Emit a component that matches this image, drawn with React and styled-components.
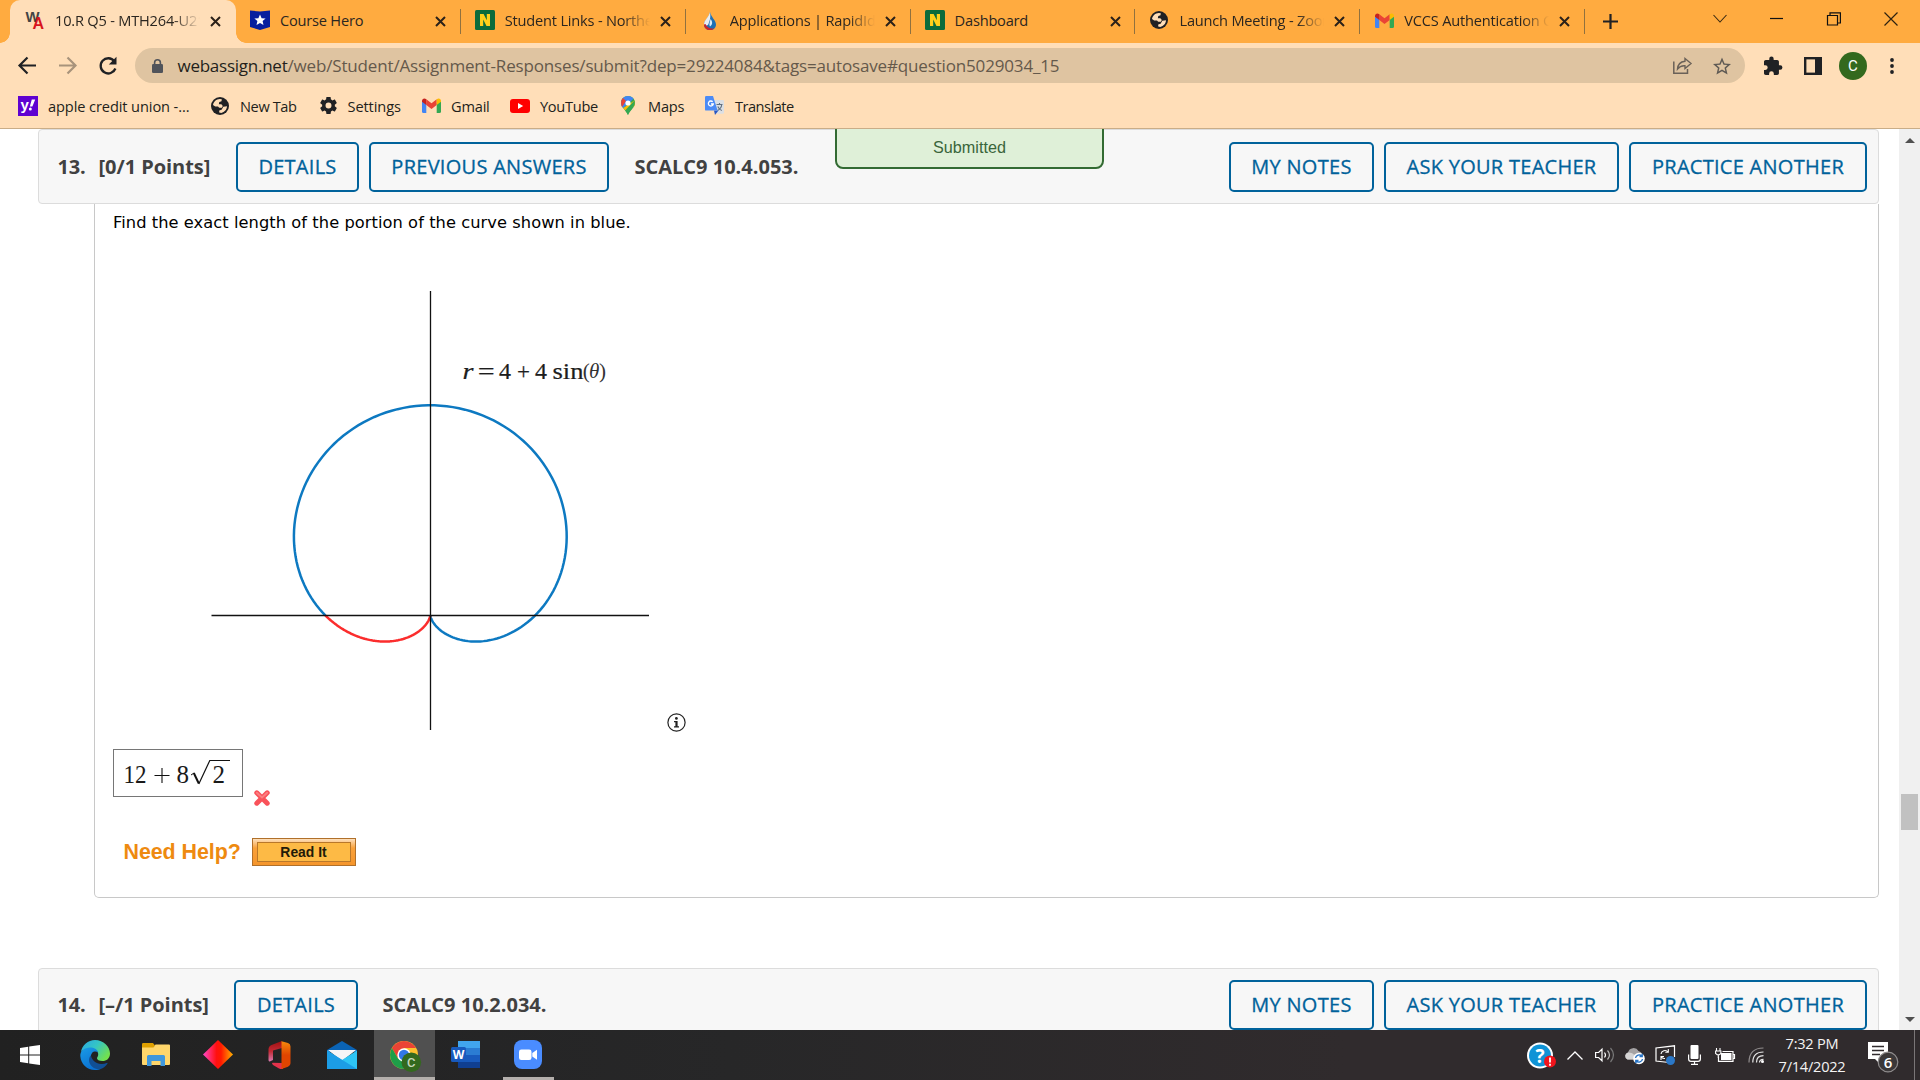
import React from "react";
import styled, { createGlobalStyle, css } from "styled-components";

const UI = `"Open Sans", "Noto Sans", sans-serif`;
const INK = "#202124";

const GlobalStyle = createGlobalStyle`
  * { box-sizing: border-box; }
  html, body { margin: 0; padding: 0; overflow: hidden; background: #fff; }
`;

const Screen = styled.div`
  width: 1920px;
  height: 1080px;
  display: flex;
  flex-direction: column;
  overflow: hidden;
  font-family: ${UI};
`;

const Icon = styled.svg`
  display: block;
  flex: none;
  width: ${(p) => p.$w}px;
  height: ${(p) => p.$h || p.$w}px;
  margin: ${(p) => p.$m || 0};
  overflow: visible;
`;

/* ---------- tab strip ---------- */

const TabStrip = styled.header`
  flex: none;
  height: 43px;
  display: flex;
  padding-left: 10px;
  background: #ffab40;
`;

const Tab = styled.div`
  position: relative;
  flex: none;
  width: 224.9px;
  height: 43px;
  display: flex;
  align-items: center;
  padding: 0 0 3px 15.5px;
  ${(p) =>
    p.$active &&
    css`
      width: 226px;
      margin-right: -1.1px;
      background: #ffdeb8;
      border-radius: 10px 10px 0 0;
      &::before,
      &::after {
        content: "";
        position: absolute;
        bottom: 0;
        width: 10px;
        height: 10px;
      }
      &::before {
        left: -10px;
        background: radial-gradient(circle at 0 0, transparent 9.5px, #ffdeb8 10px);
      }
      &::after {
        right: -10px;
        background: radial-gradient(circle at 100% 0, transparent 9.5px, #ffdeb8 10px);
      }
    `}
  ${(p) =>
    p.$divider &&
    css`
      &::after {
        content: "";
        position: absolute;
        right: -1px;
        top: 9px;
        width: 1px;
        height: 25px;
        background: #90713f;
      }
    `}
`;

const TabIcon = styled.span`
  flex: none;
  width: 29.5px;
  display: flex;
  align-items: center;
`;

const TabTitle = styled.span`
  width: 147px;
  flex: none;
  overflow: hidden;
  white-space: nowrap;
  font-size: 14.6px;
  letter-spacing: -0.2px;
  line-height: 22px;
  color: #2b2620;
  ${(p) =>
    p.$fade &&
    css`
      mask-image: linear-gradient(to right, #000 118px, transparent 145px);
    `}
`;

const TabClose = styled.span`
  width: 26px;
  display: flex;
  justify-content: center;
  padding: 3px 0 0 1px;
`;

const NewTab = styled.span`
  margin: 14px 0 0 19px;
`;

const WindowControls = styled.div`
  flex: 1;
  display: flex;
  justify-content: flex-end;
  align-items: flex-start;
  gap: 43.5px;
  padding: 12px 22px 0 0;
`;

/* ---------- toolbar ---------- */

const Toolbar = styled.div`
  flex: none;
  height: 46px;
  display: flex;
  align-items: center;
  padding: 0 26px 1px 18px;
  background: #ffdeb8;
`;

const NavButtons = styled.div`
  width: 117px;
  display: flex;
  align-items: center;
  gap: 19px;
`;

const Omnibox = styled.div`
  width: 1610px;
  height: 35px;
  display: flex;
  align-items: center;
  padding: 0 14px 0 17px;
  border-radius: 18px;
  background: #dfc4a1;
`;

const Url = styled.span`
  flex: 1;
  margin-left: 14.5px;
  font-size: 17px;
  letter-spacing: -0.16px;
  line-height: 24px;
  white-space: nowrap;
  color: #65594b;
`;

const UrlHost = styled.span`
  color: #231f1b;
  letter-spacing: -0.25px;
`;

const ToolbarActions = styled.div`
  flex: 1;
  display: flex;
  align-items: center;
  justify-content: flex-end;
`;

const Avatar = styled.span`
  width: 28px;
  height: 28px;
  margin: 0 23px 0 17px;
  border-radius: 50%;
  display: flex;
  align-items: center;
  justify-content: center;
  background: #33691e;
  color: #fff;
  font: 15px/28px Roboto, sans-serif;
`;

/* ---------- bookmarks ---------- */

const BookmarksBar = styled.nav`
  flex: none;
  height: 40px;
  display: flex;
  align-items: center;
  padding: 0 0 6px 18px;
  background: #ffdeb8;
  border-bottom: 1px solid #c9ad88;
`;

const Bookmark = styled.span`
  flex: none;
  width: ${(p) => p.$w}px;
  display: flex;
  align-items: center;
`;

const BookmarkIcon = styled.span`
  width: ${(p) => p.$w}px;
  flex: none;
`;

const BookmarkLabel = styled.span`
  font-size: 14.6px;
  letter-spacing: ${(p) => p.$ls}px;
  line-height: 20px;
  white-space: nowrap;
  color: #231f1b;
`;

/* ---------- page ---------- */

const Viewport = styled.main`
  position: relative;
  flex: none;
  height: 901px;
  display: flex;
  overflow: hidden;
  background: #fff;
`;

const Document = styled.div`
  width: 1899px;
  padding: 0 20px 0 38px;
`;

const QuestionHeader = styled.div`
  height: 75px;
  display: flex;
  align-items: flex-start;
  padding: ${(p) => p.$top}px 11px 0 ${(p) => p.$left}px;
  background: #f7f7f7;
  border: 1px solid #dcdcdc;
  border-radius: 4px;
`;

const HeaderText = styled.span`
  width: ${(p) => p.$w}px;
  flex: none;
  font-weight: 700;
  font-size: 20px;
  line-height: 49px;
  letter-spacing: ${(p) => p.$ls || 0}px;
  white-space: nowrap;
  color: #414141;
`;

const OutlineButton = styled.button`
  flex: none;
  width: ${(p) => p.$w}px;
  height: 50px;
  margin-right: ${(p) => p.$gap || 0}px;
  padding: 0 0 2px;
  border: 2px solid #00629b;
  border-radius: 5px;
  background: transparent;
  color: #00629b;
  font: 400 20px/46px ${UI};
  letter-spacing: 0.28px;
  -webkit-text-stroke: 0.3px #00629b;
  white-space: nowrap;
`;

const HeaderSpacer = styled.div`
  flex: 1;
`;

const Toast = styled.div`
  position: absolute;
  left: 835px;
  top: -8px;
  width: 269px;
  height: 48px;
  padding-top: 7px;
  border: 2px solid #336b33;
  border-radius: 8px;
  background: #dff0d8;
  color: #3a653b;
  text-align: center;
  font: 16.2px/34px "Liberation Sans", sans-serif;
`;

const QuestionBody = styled.section`
  height: 694px;
  margin: 0 0 70px 56px;
  padding: 8px 18px 0;
  border: 1px solid #c8c8c8;
  border-top: 0;
  border-radius: 0 0 5px 5px;
`;

const Prompt = styled.p`
  margin: 0;
  font: 16.25px/22px "DejaVu Sans", sans-serif;
  letter-spacing: 0.06px;
  color: #000;
`;

const Figure = styled.div`
  height: 498px;
  margin-top: 2px;
  display: flex;
  align-items: flex-end;
`;

const AnswerRow = styled.div`
  margin-top: 15px;
  display: flex;
  align-items: flex-end;
`;

const AnswerBox = styled.div`
  width: 130px;
  height: 48px;
  border: 1px solid #767676;
`;

const HelpRow = styled.div`
  display: flex;
  align-items: center;
  margin: 41px 0 0 10.5px;
`;

const HelpLabel = styled.span`
  width: 128.5px;
  font: 700 21.4px/28px "Liberation Sans", sans-serif;
  letter-spacing: -0.05px;
  color: #ee8a10;
`;

const ReadIt = styled.button`
  width: 104px;
  height: 28px;
  padding: 3px 4px;
  border: 1px solid #b0702a;
  background: linear-gradient(#fde0bd, #f9a13a 35%, #f5952b);
`;

const ReadItFace = styled.span`
  display: block;
  height: 20px;
  border: 1px solid #b9782a;
  background: #fdba45;
  color: #221a08;
  font: 700 13.9px/18px "Liberation Sans", sans-serif;
  padding-right: 1px;
  text-align: center;
`;

const ScrollBar = styled.div`
  width: 21px;
  background: #f0f0f0;
  display: flex;
  flex-direction: column;
  align-items: center;
`;

const ScrollThumb = styled.div`
  width: 17px;
  height: 36px;
  margin: 651px 0 187px;
  background: #c1c1c1;
`;

/* ---------- taskbar ---------- */

const Taskbar = styled.footer`
  flex: none;
  height: 50px;
  display: flex;
  background: linear-gradient(to right, #212121, #272728 38%, #302b2d 70%);
`;

const AppSlot = styled.span`
  flex: none;
  width: ${(p) => p.$w || 61.5}px;
  margin-right: ${(p) => p.$mr || 0}px;
  display: flex;
  align-items: center;
  justify-content: center;
  padding-top: 2px;
  background: ${(p) => (p.$active ? "#505050" : "transparent")};
  border-bottom: 3px solid ${(p) => (p.$open ? "#b4afac" : "transparent")};
  background-clip: padding-box;
`;

const Tray = styled.div`
  flex: 1;
  display: flex;
  justify-content: flex-end;
  align-items: center;
`;

const Clock = styled.div`
  width: 96px;
  text-align: center;
  color: #f4f4f4;
  font-size: 14.6px;
  letter-spacing: -0.25px;
  line-height: 23px;
  padding-bottom: 1px;
`;

const DesktopEdge = styled.span`
  width: 6px;
  height: 50px;
  border-left: 1px solid #7a7677;
`;

/* ---------- drawings ---------- */

const Cross = () => (
  <Icon $w={11} viewBox="0 0 11 11">
    <path d="M1 1l9 9M10 1l-9 9" stroke="#2b2119" strokeWidth="2" />
  </Icon>
);

const WebAssign = () => (
  <Icon $w={19} $h={20} viewBox="0 0 19 20">
    <text x="-.5" y="12" fontFamily="Liberation Sans" fontWeight="700" fontSize="14" textLength="14" lengthAdjust="spacingAndGlyphs" fill="#444">W</text>
    <text x="6.500" y="19" fontFamily="Liberation Sans" fontWeight="700" fontSize="16" fill="#d8141c">A</text>
  </Icon>
);

const CourseHero = () => (
  <Icon $w={20} viewBox="0 0 20 20">
    <path d="M0 .5 10 1.500 20 .5V17l-10 3-10-3z" fill="#071e9e" />
    <path d="M10 4.500l1.600 3.700 4 .3-3 2.600.9 3.900-3.500-2-3.500 2 .9-3.900-3-2.600 4-.3z" fill="#fff" />
  </Icon>
);

const Nova = () => (
  <Icon $w={20} viewBox="0 0 20 20">
    <rect width="20" height="20" rx="1.500" fill="#0c6b3b" />
    <path d="M5 16V4h3.600l3.200 6.300V4H15v12h-3.500L8.200 9.600V16z" fill="#ffcf1b" />
  </Icon>
);

const Drop = () => (
  <Icon $w={12} $h={18} $m="2px 0 0 4px" viewBox="0 0 12 18">
    <path d="M6 0C7 5 12 8.500 12 12.500 12 16 9.500 18 6 18S0 16 0 12.500C0 8.500 5.500 5 6 0z" fill="#1e70b4" />
    <path d="M6 0C5 5 0 8 0 12.500c1 1.500 3.500 1.500 4.500-.5C5.500 9 7 6 6 0z" fill="#e9eef3" />
    <path d="M0 12.500C0 16 2.500 18 6 18c2 0 3.500-.6 4.500-1.800C6 17 3 15.500 1.500 12z" fill="#c8262d" />
    <path d="M6.500 7C9 10 8.500 13 6 14.500 4.500 12.500 6 10 6.500 7z" fill="#d9ecf8" />
  </Icon>
);

const Globe = () => (
  <Icon $w={18} viewBox="0 0 18 18">
    <circle cx="9" cy="9" r="9" fill={INK} />
    <path d="M10.800 2.300 7.800 3.800 6.300 6.200l1.600 1.600h3l1.800 1.600 2.600.2.900-1.600C16 4.800 13.500 2.600 10.800 2.300z" fill={INK} />
    <path d="M2 8C2.500 4.500 5.300 2.100 8.800 1.900l2 .3-.3 2-2.200.9-.5 2.100h2.600l1.400 1.900-1 1.700H8.200L7 9.500H4.200z" fill="#ffdeb8" />
    <path d="M16 9.300c-.1 3.300-2.500 6-5.700 6.600L8.200 15.600V13.400L10.600 12.700 12.300 9.800z" fill="#ffdeb8" />
  </Icon>
);

const Gmail = () => (
  <Icon $w={19} $h={15} viewBox="0 0 19 15">
    <path d="M0 3v10.500Q0 15 1.400 15H4.300V5z" fill="#4285f4" />
    <path d="M19 3v10.500Q19 15 17.600 15h-2.900V5z" fill="#34a853" />
    <path d="M4.300 1.200 9.500 5.200 14.700 1.200V7L9.500 11 4.300 7z" fill="#ea4335" />
    <path d="M0 3C0 .4 2.500-.4 4.300 1.200V7L0 3.800z" fill="#c5221f" />
    <path d="M19 3c0-2.600-2.500-3.400-4.300-1.800V7L19 3.800z" fill="#fbbc04" />
  </Icon>
);

const Yahoo = () => (
  <Icon $w={20} viewBox="0 0 20 20">
    <rect width="20" height="20" fill="#5f01d1" />
    <text x="2.500" y="14" fontFamily="Liberation Sans" fontWeight="700" fontSize="15" fill="#fff">y</text>
    <path d="M13.800 3.500h3.400l-2.800 7h-2.600z" fill="#fff" />
    <circle cx="12.300" cy="13" r="1.500" fill="#fff" />
  </Icon>
);

const Gear = ({ size }) => (
  <Icon $w={size} viewBox="2 2 20 20">
    <path fill={INK} d="M19.430 12.980c.04-.32.07-.64.07-.98s-.03-.66-.07-.98l2.110-1.650c.19-.15.24-.42.12-.64l-2-3.460c-.12-.22-.39-.3-.61-.22l-2.490 1c-.52-.4-1.080-.73-1.690-.98l-.38-2.650C14.460 2.180 14.250 2 14 2h-4c-.25 0-.46.18-.49.42l-.38 2.650c-.61.25-1.170.59-1.690.98l-2.490-1c-.23-.09-.49 0-.61.22l-2 3.460c-.13.22-.07.49.12.64l2.110 1.650c-.04.32-.07.65-.07.98s.03.66.07.98l-2.110 1.650c-.19.15-.24.42-.12.64l2 3.460c.12.22.39.3.61.22l2.490-1c.52.4 1.080.73 1.690.98l.38 2.650c.03.24.24.42.49.42h4c.25 0 .46-.18.49-.42l.38-2.650c.61-.25 1.170-.59 1.690-.98l2.490 1c.23.09.49 0 .61-.22l2-3.460c.12-.22.07-.49-.12-.64zM12 15.500A3.500 3.500 0 1 1 12 8.500a3.500 3.500 0 0 1 0 7z" />
  </Icon>
);

const YouTube = () => (
  <Icon $w={20} $h={14} viewBox="0 0 20 14">
    <rect width="20" height="14" rx="3" fill="#f00" />
    <path d="M8 4l5.200 3L8 10z" fill="#fff" />
  </Icon>
);

const Maps = () => (
  <Icon $w={14} $h={19} viewBox="0 0 14 19">
    <path d="M7 0C3 0 0 3 0 7c0 4.500 5 7 7 12 2-5 7-7.500 7-12 0-4-3-7-7-7z" fill="#34a853" />
    <path d="M0 7c0 2 1 3.700 2.200 5L12.500 2.800C11.200 1 9.200 0 7 0 3 0 0 3 0 7z" fill="#4285f4" />
    <path d="M2.200 12 13.500 4.500c.9 2.300.6 4.300-.4 5.900L4.300 14.400z" fill="#fbbc04" />
    <path d="M.1 6C.3 4.300 1 3 2 2l3 3-4 6C.4 9.800 0 8.200.1 6z" fill="#ea4335" />
    <path d="M13.500 4.600c1.300 4-1 6.400-3.200 8.900-1.400 1.600-2.700 3.300-3.300 5.500-.7-1.700-1.700-3.200-2.900-4.600z" fill="#34a853" />
    <circle cx="7" cy="7" r="2.600" fill="#fff" />
  </Icon>
);

const Translate = () => (
  <Icon $w={19} viewBox="0 0 19 19">
    <path d="M8 4h9.800q1.200 0 1.200 1.200V16.500q0 1.200-1.200 1.200H12z" fill="#dcdfe3" />
    <path d="M11.500 8.500h6M14.500 7v1.500M12.500 14.500c2.500-1.200 4-3.200 4.200-6M12.800 10.500c.8 1.900 2 3.200 4 4" stroke="#5f6f80" strokeWidth="1.100" fill="none" />
    <path d="M9 14.500h4.500l-3.500 4.500z" fill="#2456c5" />
    <path d="M1.200 0H8l4.600 14.600H1.200Q0 14.600 0 13.400V1.200Q0 0 1.200 0z" fill="#4c8bf5" />
    <path d="M7.700 5.800A2.500 2.500 0 1 0 8.300 8H6" stroke="#fff" strokeWidth="1.300" fill="none" />
  </Icon>
);

const TAU = Math.PI * 2;
const UNIT = 26.25;

function cardioid(from, to) {
  const points = [];
  for (let i = 0; i <= 160; i++) {
    const t = from + ((to - from) * i) / 160;
    const r = UNIT * (4 + 4 * Math.sin(t));
    points.push(`${(317.3 + r * Math.cos(t)).toFixed(2)} ${(379.3 - r * Math.sin(t)).toFixed(2)}`);
  }
  return `M${points.join("L")}`;
}

const Graph = () => (
  <Icon $w={551} $h={498} viewBox="0 0 551 498">
    <path d={cardioid(-TAU / 4, TAU / 2)} fill="none" stroke="#0d79c1" strokeWidth="2.500" />
    <path d={cardioid(TAU / 2, (TAU * 3) / 4)} fill="none" stroke="#fb2d2d" strokeWidth="2.500" />
    <path d="M317.500 55V494M98.500 379.500H536" stroke="#111" strokeWidth="1.300" />
    <g fontFamily="Liberation Serif" fontSize="23" fill="#1d1d1d" stroke="#1d1d1d" strokeWidth=".2">
      <text x="349.500" y="142.500" fontStyle="italic" textLength="11" lengthAdjust="spacingAndGlyphs">r</text>
      <text x="364.800" y="142.500" textLength="17" lengthAdjust="spacingAndGlyphs">=</text>
      <text x="386" y="142.500" textLength="12" lengthAdjust="spacingAndGlyphs">4</text>
      <text x="404" y="142.500">+</text>
      <text x="422" y="142.500" textLength="12" lengthAdjust="spacingAndGlyphs">4</text>
      <text x="439.500" y="142.500" textLength="31" lengthAdjust="spacingAndGlyphs">sin</text>
    </g>
    <g fontFamily="Liberation Serif" fontSize="21" fill="#333">
      <text x="469.800" y="142">(</text>
      <text x="476" y="142" fontStyle="italic">θ</text>
      <text x="486" y="142">)</text>
    </g>
  </Icon>
);

const Info = () => (
  <Icon $w={19} $m="0 0 2px 2.5px" viewBox="0 0 19 19">
    <circle cx="9.500" cy="9.500" r="8.600" fill="none" stroke="#222" strokeWidth="1.200" />
    <circle cx="9.400" cy="5.400" r="1.400" fill="#222" />
    <path d="M7 8h3.600v5.300H12v1.200H7v-1.200h1.400V9.200H7z" fill="#222" />
  </Icon>
);

const Answer = () => (
  <Icon $w={128} $h={46} viewBox="0 0 128 46">
    <g fontFamily="Liberation Serif" fontSize="26" fill="#1a1a1a">
      <text x="9.500" y="32.500" textLength="23" lengthAdjust="spacingAndGlyphs">12</text>
      <text x="62.500" y="32.500" textLength="12.500" lengthAdjust="spacingAndGlyphs">8</text>
      <text x="98.500" y="32.500" textLength="12.500" lengthAdjust="spacingAndGlyphs">2</text>
    </g>
    <path d="M40.500 25.500h15M48 18v15" stroke="#111" strokeWidth="1.100" />
    <path d="M77 25l3-2" stroke="#111" strokeWidth="1" />
    <path d="M79.800 23l5 10.500" stroke="#111" strokeWidth="2" />
    <path d="M84.800 34l11-23.500H116" stroke="#111" strokeWidth="1.200" fill="none" />
  </Icon>
);

const WrongMark = () => (
  <Icon $w={16} $m="0 0 -9px 11px" viewBox="0 0 16 16">
    <path d="M2.800 2.800l10.400 10.400M13.200 2.800 2.800 13.200" stroke="#f9525a" strokeWidth="5" strokeLinecap="round" />
    <path d="M2.800 2.800 8 7.500l5.200-4.700" stroke="#fc7e80" strokeWidth="2" fill="none" strokeLinecap="round" />
  </Icon>
);

const ScrollArrow = ({ down }) => (
  <Icon $w={10} $h={5} $m={down ? 0 : "9px 0 0"} viewBox="0 0 10 5">
    <path d={down ? "M0 0h10L5 5z" : "M0 5h10L5 0z"} fill="#505050" />
  </Icon>
);

const Edge = () => (
  <Icon $w={30} viewBox="0 0 30 30">
    <defs>
      <linearGradient id="e1" x1="0" y1="0" x2="1" y2=".6">
        <stop offset="0" stopColor="#2aa6e4" /><stop offset=".5" stopColor="#34c5c5" /><stop offset="1" stopColor="#72e04f" />
      </linearGradient>
      <linearGradient id="e2" x1="0" y1="0" x2=".5" y2="1">
        <stop offset="0" stopColor="#1a9be6" /><stop offset="1" stopColor="#0a70d0" />
      </linearGradient>
    </defs>
    <path d="M1 12C2 5 8 0 15 0c8.500 0 15 6.500 15 13.500 0 5-3.500 7.500-7.500 7.500-3.500 0-5.500-1.500-5.500-2.800 0-1 1.200-1.600 1.200-4 0-3-2.700-5.700-7-5.700C6.500 8.500 3 10 1 12z" fill="url(#e1)" />
    <path d="M.3 16C0 11 4.500 7.500 10 7.500c4 0 7.500 1.800 8 5-1.200-1.200-3-1.300-4.500-.7C11 13 10 17 11.500 21c1.500 4.500 5.500 8.300 10 7.500-2 1-4 1.500-6.500 1.500C7 30 .8 24 .3 16z" fill="url(#e2)" />
    <path d="M11 15.500C8 18 8.500 23 12 26.500c3 3 7.500 3.300 10.500 1.800 2.300-1.200 4-3 5-4.800.3-.6-.2-.9-.8-.6-1.700.9-3.500 1.200-5.500 1.100-5-.3-9.500-3.800-10.200-8.500z" fill="#114f94" />
  </Icon>
);

const Explorer = () => (
  <Icon $w={28} $h={23} viewBox="0 0 28 23">
    <path d="M0 1.200Q0 0 1.200 0H11l2 2.500-1 3H0z" fill="#dfa000" />
    <path d="M0 4.500h11.500l2-3H27q1 0 1 1V21q0 1-1 1H1q-1 0-1-1z" fill="#ffd66b" />
    <path d="M5 23v-9.500Q5 12 6.500 12h15q1.500 0 1.500 1.500V23h-4.500v-5h-9v5z" fill="#3f97dc" />
  </Icon>
);

const Diamond = () => (
  <Icon $w={30} $h={29} viewBox="0 0 30 29">
    <defs>
      <linearGradient id="dm"><stop offset="0" stopColor="#ff48c8" /><stop offset=".45" stopColor="#ff1010" /><stop offset=".6" stopColor="#ff1800" /><stop offset="1" stopColor="#ffb000" /></linearGradient>
    </defs>
    <path d="M15 0l15 14.500L15 29 0 14.500z" fill="url(#dm)" />
  </Icon>
);

const Office = () => (
  <Icon $w={23} $h={28} viewBox="0 0 23 28">
    <defs>
      <linearGradient id="of" x2="0" y2="1"><stop offset="0" stopColor="#9e1010" /><stop offset=".5" stopColor="#c22a35" /><stop offset="1" stopColor="#d87bb0" /></linearGradient>
      <linearGradient id="og" x2="0" y2="1"><stop offset="0" stopColor="#f58a0c" /><stop offset=".5" stopColor="#e04500" /></linearGradient>
    </defs>
    <path d="M14 0 3.500 4Q.5 5.200.5 8.500V19q0 2 1.800 1.300L5 19V9.500L14 7z" fill="url(#of)" />
    <path d="M4.500 21.800 14 22l1 6q-2 .3-4-.5l-6-3.500q-1.800-1.600-.5-2.200z" fill="#e3324b" />
    <path d="M13.500.2 20 2q2.500.8 2.500 3.500v16.800q0 2.700-2.500 3.500L13.500 28z" fill="url(#og)" />
  </Icon>
);

const Mail = () => (
  <Icon $w={30} $h={28} viewBox="0 0 30 28">
    <path d="M0 9 15 0l15 9v2H0z" fill="#0a63b5" />
    <path d="M1 9h28L15 20z" fill="#f5f5f7" />
    <path d="M0 9.500 15 19l15-9.500V28H0z" fill="#2ec5f5" />
    <path d="M0 28V9.500L30 28z" fill="#1c9de6" />
  </Icon>
);

const Chrome = () => (
  <Icon $w={28} $m="0 0 0 -1px" viewBox="0 0 28 28">
    <circle cx="14" cy="14" r="14" fill="#fbc02d" />
    <path d="M14 7h12.100A14 14 0 0 0 1.900 7L8 17.500z" fill="#ea4335" />
    <path d="M1.900 7A14 14 0 0 0 13.500 28L20 17.500 8 17.500z" fill="#1e9e49" />
    <circle cx="14" cy="14" r="6.700" fill="#fff" />
    <circle cx="14" cy="14" r="5.200" fill="#3277e8" />
    <circle cx="21.300" cy="21.300" r="9.800" fill="#33691e" />
    <text x="21.300" y="26" textAnchor="middle" fontFamily="Roboto" fontSize="13" fontWeight="500" fill="#c5d6bd">C</text>
  </Icon>
);

const Word = () => (
  <Icon $w={29} $h={27} $m="0 0 0 -2px" viewBox="0 0 29 27">
    <path d="M7 0h22v7H7z" fill="#41a5ee" />
    <path d="M7 7h22v7H7z" fill="#2b7cd3" />
    <path d="M7 14h22v7H7z" fill="#185abd" />
    <path d="M7 21h22v6H7z" fill="#103f91" />
    <rect y="6" width="15" height="15" rx="1.500" fill="#185abd" />
    <text x="7.500" y="18" textAnchor="middle" fontFamily="Open Sans" fontSize="12" fontWeight="700" fill="#fff">W</text>
  </Icon>
);

const Zoom = () => (
  <Icon $w={28} $h={29} viewBox="0 0 28 29">
    <rect width="28" height="29" rx="8" fill="#4a8cff" />
    <rect x="5" y="9.500" width="12.500" height="10.500" rx="2.300" fill="#fff" />
    <path d="M18.300 13 23 9.800v9.900l-4.700-3.200z" fill="#fff" />
  </Icon>
);

const TABS = [
  { title: "10.R Q5 - MTH264-U21B", icon: <WebAssign />, active: true, fade: true },
  { title: "Course Hero", icon: <CourseHero />, divider: true },
  { title: "Student Links - Northern", icon: <Nova />, divider: true, fade: true },
  { title: "Applications | RapidIdent", icon: <Drop />, divider: true, fade: true },
  { title: "Dashboard", icon: <Nova />, divider: true },
  { title: "Launch Meeting - Zoom", icon: <Globe />, divider: true, fade: true },
  { title: "VCCS Authentication C", icon: <Gmail />, divider: true, fade: true },
];

const BOOKMARKS = [
  { label: "apple credit union -...", icon: <Yahoo />, width: 193, iconWidth: 30, ls: -0.1 },
  { label: "New Tab", icon: <Globe />, width: 109, iconWidth: 29, ls: -0.4 },
  { label: "Settings", icon: <Gear size={17} />, width: 102, iconWidth: 27.5, ls: -0.1 },
  { label: "Gmail", icon: <Gmail />, width: 88, iconWidth: 29, ls: -0.2 },
  { label: "YouTube", icon: <YouTube />, width: 111, iconWidth: 30, ls: -0.3 },
  { label: "Maps", icon: <Maps />, width: 84, iconWidth: 27, ls: -0.2 },
  { label: "Translate", icon: <Translate />, width: 100, iconWidth: 30, ls: -0.5 },
];

function RightButtons() {
  return (
    <>
      <HeaderSpacer />
      <OutlineButton $w={145} $gap={10}>MY NOTES</OutlineButton>
      <OutlineButton $w={235} $gap={10}>ASK YOUR TEACHER</OutlineButton>
      <OutlineButton $w={238}>PRACTICE ANOTHER</OutlineButton>
    </>
  );
}

export default function App() {
  return (
    <Screen>
      <GlobalStyle />
      <TabStrip>
        {TABS.map((t) => (
          <Tab key={t.title} $active={t.active} $divider={t.divider}>
            <TabIcon>{t.icon}</TabIcon>
            <TabTitle $fade={t.fade}>{t.title}</TabTitle>
            <TabClose><Cross /></TabClose>
          </Tab>
        ))}
        <NewTab>
          <Icon $w={15} viewBox="0 0 15 15"><path d="M7.500 0v15M0 7.500h15" stroke={INK} strokeWidth="2.200" /></Icon>
        </NewTab>
        <WindowControls>
          <Icon $w={14} $m="2px 0 0" viewBox="0 0 14 14"><path d="M.5 1l6.500 7 6.500-7" fill="none" stroke="#3a2a12" strokeWidth="1.100" /></Icon>
          <Icon $w={13} viewBox="0 0 13 13"><path d="M0 6.500h13" stroke="#111" strokeWidth="1.200" /></Icon>
          <Icon $w={14} viewBox="0 0 14 14"><path d="M.5 3.500h10v9.500H.5zM3 3V.8h10.400V11H11" fill="none" stroke="#111" strokeWidth="1.200" /></Icon>
          <Icon $w={14} viewBox="0 0 14 14"><path d="M.5.5l13 13M13.500.5l-13 13" stroke="#2e2210" strokeWidth="1.200" /></Icon>
        </WindowControls>
      </TabStrip>

      <Toolbar>
        <NavButtons>
          <Icon $w={19} viewBox="0 0 19 19"><path d="M18 9.500H2M9.500 1.500l-8 8 8 8" fill="none" stroke={INK} strokeWidth="2.200" /></Icon>
          <Icon $w={19} $m="0 0 0 2px" viewBox="0 0 19 19"><path d="M1 9.500h16M9.500 1.500l8 8-8 8" fill="none" stroke="#a8937b" strokeWidth="2.200" /></Icon>
          <Icon $w={20} $m="0 0 0 2px" viewBox="0 0 20 20">
            <path d="M16.300 5.200A7.600 7.600 0 1 0 17.400 12.500" fill="none" stroke={INK} strokeWidth="2.300" />
            <path d="M18.500.8v7.700h-7.700z" fill={INK} />
          </Icon>
        </NavButtons>
        <Omnibox>
          <Icon $w={11} $h={14} viewBox="0 0 11 14">
            <rect y="5" width="11" height="9" rx="1.300" fill="#50535a" />
            <path d="M2.600 6V3.700a2.900 2.900 0 0 1 5.800 0V6" fill="none" stroke="#50535a" strokeWidth="1.600" />
          </Icon>
          <Url><UrlHost>webassign.net</UrlHost>/web/Student/Assignment-Responses/submit?dep=29224084&amp;tags=autosave#question5029034_15</Url>
          <Icon $w={19} $h={17} $m="0 21px 0 0" viewBox="0 0 19 17">
            <path d="M.8 4.500v11.700h13.700V12" fill="none" stroke="#6a6158" strokeWidth="1.500" />
            <path d="M12 1.500l6 5-6 5V8.800C8.500 8.500 6.500 9.500 4.500 12c.3-4.500 3-7.300 7.500-7.800z" fill="none" stroke="#6a6158" strokeWidth="1.400" />
          </Icon>
          <Icon $w={18} viewBox="2 2 20 19">
            <path fill="#5f5a54" d="M22 9.240l-7.190-.62L12 2 9.190 8.630 2 9.240l5.460 4.730L5.820 21 12 17.270 18.180 21l-1.630-7.030zM12 15.400l-3.760 2.270 1-4.280-3.320-2.880 4.380-.38L12 6.100l1.710 4.040 4.380.38-3.320 2.880 1 4.280z" />
          </Icon>
        </Omnibox>
        <ToolbarActions>
          <Icon $w={18} viewBox="2 1.500 20.500 20.500">
            <path fill={INK} d="M20.500 11H19V7c0-1.100-.9-2-2-2h-4V3.500a2.500 2.500 0 0 0-5 0V5H4c-1.100 0-2 .9-2 2v3.800h1.500a2.700 2.700 0 0 1 0 5.400H2V20c0 1.100.9 2 2 2h3.800v-1.500a2.700 2.700 0 0 1 5.400 0V22H17c1.100 0 2-.9 2-2v-4h1.500a2.500 2.500 0 0 0 0-5z" />
          </Icon>
          <Icon $w={18} $m="0 0 0 22px" viewBox="0 0 18 18">
            <rect x="1.200" y="1.200" width="15.600" height="15.600" fill="none" stroke={INK} strokeWidth="2.400" />
            <rect x="11" y="1" width="6" height="16" fill={INK} />
          </Icon>
          <Avatar>C</Avatar>
          <Icon $w={4} $h={16} viewBox="0 0 4 16"><g fill={INK}><circle cx="2" cy="2" r="1.900" /><circle cx="2" cy="8" r="1.900" /><circle cx="2" cy="14" r="1.900" /></g></Icon>
        </ToolbarActions>
      </Toolbar>

      <BookmarksBar>
        {BOOKMARKS.map((b) => (
          <Bookmark key={b.label} $w={b.width}>
            <BookmarkIcon $w={b.iconWidth}>{b.icon}</BookmarkIcon>
            <BookmarkLabel $ls={b.ls}>{b.label}</BookmarkLabel>
          </Bookmark>
        ))}
      </BookmarksBar>

      <Viewport>
        <Document>
          <QuestionHeader $top={12} $left={18.5}>
            <HeaderText $w={41} $ls={-0.2}>13.</HeaderText>
            <HeaderText $w={137.5} $ls={-0.05}>[0/1 Points]</HeaderText>
            <OutlineButton $w={123} $gap={10}>DETAILS</OutlineButton>
            <OutlineButton $w={240} $gap={25.5}>PREVIOUS ANSWERS</OutlineButton>
            <HeaderText $w={169}>SCALC9 10.4.053.</HeaderText>
            <RightButtons />
          </QuestionHeader>
          <QuestionBody>
            <Prompt>Find the exact length of the portion of the curve shown in blue.</Prompt>
            <Figure><Graph /><Info /></Figure>
            <AnswerRow>
              <AnswerBox><Answer /></AnswerBox>
              <WrongMark />
            </AnswerRow>
            <HelpRow>
              <HelpLabel>Need Help?</HelpLabel>
              <ReadIt><ReadItFace>Read It</ReadItFace></ReadIt>
            </HelpRow>
          </QuestionBody>
          <QuestionHeader $top={11} $left={18.5}>
            <HeaderText $w={41} $ls={-0.2}>14.</HeaderText>
            <HeaderText $w={135.5} $ls={-0.05}>[–/1 Points]</HeaderText>
            <OutlineButton $w={124} $gap={24.5}>DETAILS</OutlineButton>
            <HeaderText $w={169}>SCALC9 10.2.034.</HeaderText>
            <RightButtons />
          </QuestionHeader>
        </Document>
        <ScrollBar>
          <ScrollArrow />
          <ScrollThumb />
          <ScrollArrow down />
        </ScrollBar>
        <Toast>Submitted</Toast>
      </Viewport>

      <Taskbar>
        <AppSlot $w={60} $mr={4}>
          <Icon $w={20} viewBox="0 0 20 20"><path d="M0 3l8.200-1.200v7.700H0zM9.200 1.600 20 0v9.500H9.200zM0 10.500h8.200v7.700L0 17zM9.200 10.500H20V20L9.200 18.400z" fill="#fff" /></Icon>
        </AppSlot>
        <AppSlot><Edge /></AppSlot>
        <AppSlot><Explorer /></AppSlot>
        <AppSlot><Diamond /></AppSlot>
        <AppSlot><Office /></AppSlot>
        <AppSlot $w={64}><Mail /></AppSlot>
        <AppSlot $w={61} $active $open><Chrome /></AppSlot>
        <AppSlot $w={62} $mr={5.5}><Word /></AppSlot>
        <AppSlot $w={51} $open><Zoom /></AppSlot>
        <Tray>
          <Icon $w={29} $h={27} viewBox="0 0 29 27">
            <circle cx="13" cy="13.500" r="13" fill="#fff" />
            <circle cx="13" cy="13.500" r="11" fill="#0f93d6" />
            <text x="13" y="20.500" textAnchor="middle" fontFamily="Open Sans" fontWeight="700" fontSize="19" fill="#fff">?</text>
            <circle cx="23" cy="19.500" r="6" fill="#f0141c" />
            <path d="M23 15.500v5M23 21.800v2" stroke="#fff" strokeWidth="1.800" />
          </Icon>
          <Icon $w={16} $h={9} $m="0 12px 0 11px" viewBox="0 0 16 9"><path d="M.5 8.500 8 1l7.500 7.500" fill="none" stroke="#fff" strokeWidth="1.300" /></Icon>
          <Icon $w={20} $h={16} $m="0 9px 0 0" viewBox="0 0 20 16">
            <path d="M.6 5.500h3L7 2.200v11.600l-3.400-3.300h-3zM9.500 5.500q2 2.500 0 5" fill="none" stroke="#fff" strokeWidth="1.200" />
            <path d="M12.500 3.500q4 4.500 0 9" fill="none" stroke="#bbb" strokeWidth="1.200" />
            <path d="M15.500 1q6 7 0 14" fill="none" stroke="#777" strokeWidth="1.200" />
          </Icon>
          <Icon $w={21} $h={17} $m="0 10px 0 0" viewBox="0 0 21 17">
            <path d="M3.500 12.500A3.700 3.700 0 0 1 4 5.500 5.700 5.700 0 0 1 14.500 4 5 5 0 0 1 17 12.500z" fill="#a5a3a4" />
            <path d="M3.500 12.500A3.700 3.700 0 0 1 4 5.500q4-.5 7 3v4z" fill="#d5d4d4" />
            <circle cx="15" cy="11.500" r="5.800" fill="#fff" />
            <path d="M11.500 11a3.700 3.700 0 0 1 6.300-2M18.500 12a3.700 3.700 0 0 1-6.300 2M18.200 6.800V9.500H15.500M11.800 16.200v-2.700h2.700" fill="none" stroke="#2672c4" strokeWidth="1.400" />
          </Icon>
          <Icon $w={21} $h={20} $m="0 12px 0 0" viewBox="0 0 21 20">
            <path d="M14 17.500 1 16V3L19.500.8V12" fill="none" stroke="#fff" strokeWidth="1.200" />
            <path d="M6 9a4 4 0 0 1 7-2M6 11.500a4 4 0 0 0 4 2M13.300 4v3.200h-3M6 15v-3.500h3" fill="none" stroke="#fff" strokeWidth="1.100" />
            <circle cx="15.500" cy="15.500" r="4.500" fill="#2b78c8" />
          </Icon>
          <Icon $w={13} $h={20} $m="0 14px 0 0" viewBox="0 0 13 20">
            <rect x="2.500" width="8" height="14" rx="1" fill="#fff" />
            <path d="M.6 9.500v4.500q0 2.300 2.400 2.300h7q2.400 0 2.400-2.300V9.500M6.500 16.500v3M3 19.400h7" fill="none" stroke="#fff" strokeWidth="1.200" />
          </Icon>
          <Icon $w={20} $h={14} $m="0 13px 0 0" viewBox="0 0 20 14">
            <path d="M3.500 8.500v4.900h14.500V3.500H7.500M18 6.500h1.500v4H18" fill="none" stroke="#fff" strokeWidth="1.200" />
            <rect x="6" y="5" width="10.500" height="7" fill="#fff" />
            <path d="M1.500 0v3M5 0v3M.6 3h5.300v2.500l-1.600 1.300H2.200L.6 5.500zM3.300 7v3" fill="none" stroke="#fff" strokeWidth="1.100" />
          </Icon>
          <Icon $w={16} viewBox="0 0 16 16">
            <g fill="none" stroke="#e8e8e8" strokeWidth="1.200">
              <path d="M1 15.500Q1 1 15.500 1" stroke="#918d8e" /><path d="M4.800 15.500Q4.800 5 15.500 5" /><path d="M8.500 15.500Q8.500 8.700 15.500 8.700" />
              <path d="M11.500 15.500q0-3.200 4-3.200" />
            </g>
            <circle cx="14.500" cy="14.500" r="1.500" fill="#fff" />
          </Icon>
          <Clock>7:32 PM<br />7/14/2022</Clock>
          <Icon $w={31} $h={30} $m="3px 15px 0 8px" viewBox="0 0 31 30">
            <path d="M0 0h20v17h-9v4l-4-4H0z" fill="#fff" />
            <path d="M4 4.500h12M4 8.500h12M4 12.500h8" stroke="#302b2d" strokeWidth="1.300" />
            <circle cx="20" cy="20" r="9.800" fill="#3b3839" stroke="#908d8e" strokeWidth="1.200" />
            <text x="20" y="25.500" textAnchor="middle" fontFamily="Open Sans" fontWeight="600" fontSize="15" fill="#fff">6</text>
          </Icon>
          <DesktopEdge />
        </Tray>
      </Taskbar>
    </Screen>
  );
}
